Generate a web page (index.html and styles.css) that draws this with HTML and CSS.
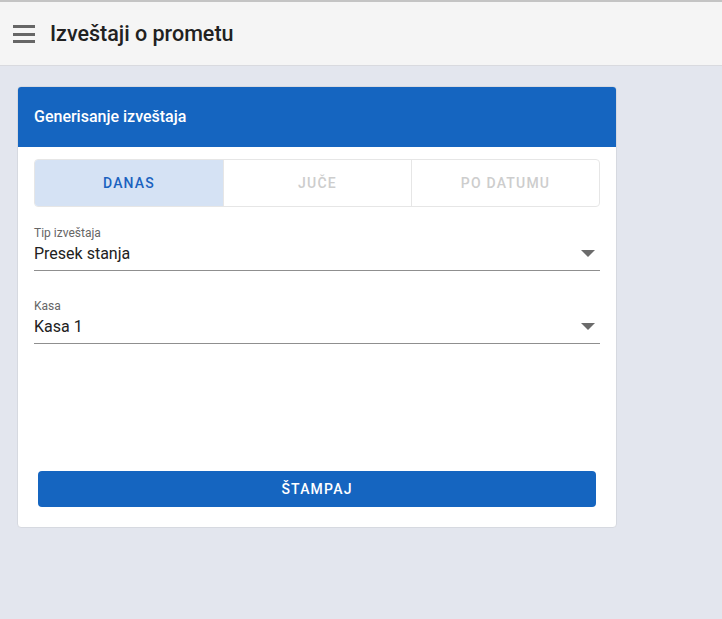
FILE: index.html
```html
<!DOCTYPE html>
<html lang="sr">
<head>
  <meta charset="UTF-8" />
  <meta name="viewport" content="width=device-width, initial-scale=1.0" />
  <title>Izveštaji o prometu</title>
  <link rel="stylesheet" href="styles.css">
</head>
<body>
  <header class="topbar">
    <button class="menu-btn" aria-label="meni">
      <span></span><span></span><span></span>
    </button>
    <h1>Izveštaji o prometu</h1>
  </header>

  <main class="page">
    <section class="card">
      <div class="card-head">Generisanje izveštaja</div>
      <div class="card-body">
        <div class="tabs">
          <div class="tab active">DANAS</div>
          <div class="tab">JUČE</div>
          <div class="tab">PO DATUMU</div>
        </div>

        <div class="field">
          <label>Tip izveštaja</label>
          <div class="select">
            <span>Presek stanja</span>
            <svg width="14" height="7" viewBox="0 0 14 7"><path d="M0 0h14L7 7z" fill="#6b6b6b"/></svg>
          </div>
        </div>

        <div class="field">
          <label>Kasa</label>
          <div class="select">
            <span>Kasa 1</span>
            <svg width="14" height="7" viewBox="0 0 14 7"><path d="M0 0h14L7 7z" fill="#6b6b6b"/></svg>
          </div>
        </div>

        <button class="print-btn">ŠTAMPAJ</button>
      </div>
    </section>
  </main>
</body>
</html>
```

FILE: styles.css
```css
* {
  margin: 0;
  padding: 0;
  box-sizing: border-box;
  font-family: Roboto, 'Liberation Sans', sans-serif;
}
html, body {
  height: 100%;
  overflow: hidden;
}
body {
  background: #e3e6ee;
  border-top: 2px solid #c4c4c4;
}
.topbar {
  height: 64px;
  background: #f5f5f5;
  border-bottom: 1px solid #d9dadf;
  display: flex;
  align-items: center;
  padding-left: 13px;
  gap: 15px;
}
.menu-btn {
  width: 22px;
  height: 18px;
  border: none;
  background: none;
  display: flex;
  flex-direction: column;
  justify-content: space-between;
  margin-top: 1px;
}
.menu-btn span {
  display: block;
  height: 3px;
  background: #666;
}
.topbar h1 {
  font-size: 21.5px;
  font-weight: 500;
  color: #212121;
}
.page {
  padding: 20px 17px;
}
.card {
  width: 600px;
  background: #fff;
  border: 1px solid #d6d9e0;
  border-radius: 4px;
  overflow: hidden;
}
.card-head {
  height: 61px;
  background: #1565c0;
  color: #fff;
  font-size: 16px;
  font-weight: 500;
  display: flex;
  align-items: center;
  padding-left: 17px;
  margin: -1px -1px 0;
}
.card-body {
  padding: 12px 16px 20px;
}
.tabs {
  display: grid;
  grid-template-columns: repeat(3, 1fr);
  height: 48px;
  border: 1px solid #e6e6e6;
  border-radius: 4px;
  overflow: hidden;
}
.tab {
  display: flex;
  align-items: center;
  justify-content: center;
  font-size: 14px;
  font-weight: 500;
  letter-spacing: 1.2px;
  color: #cdcdcd;
}
.tab + .tab {
  border-left: 1px solid #e6e6e6;
}
.tab.active {
  background: #d5e2f4;
  color: #1b62bf;
}
.field {
  margin-top: 19px;
}
.field + .field {
  margin-top: 28px;
}
.field label {
  display: block;
  font-size: 12px;
  color: #666;
  line-height: 14px;
}
.select {
  display: flex;
  align-items: center;
  justify-content: space-between;
  height: 31px;
  border-bottom: 1px solid #8f8f8f;
  font-size: 16px;
  color: #212121;
  padding-bottom: 3px;
  padding-right: 5px;
}
.print-btn {
  display: block;
  width: 558px;
  height: 36px;
  margin: 127px auto 0;
  border: none;
  border-radius: 4px;
  background: #1565c0;
  color: #fff;
  font-size: 14px;
  font-weight: 500;
  letter-spacing: 1.2px;
}
```
